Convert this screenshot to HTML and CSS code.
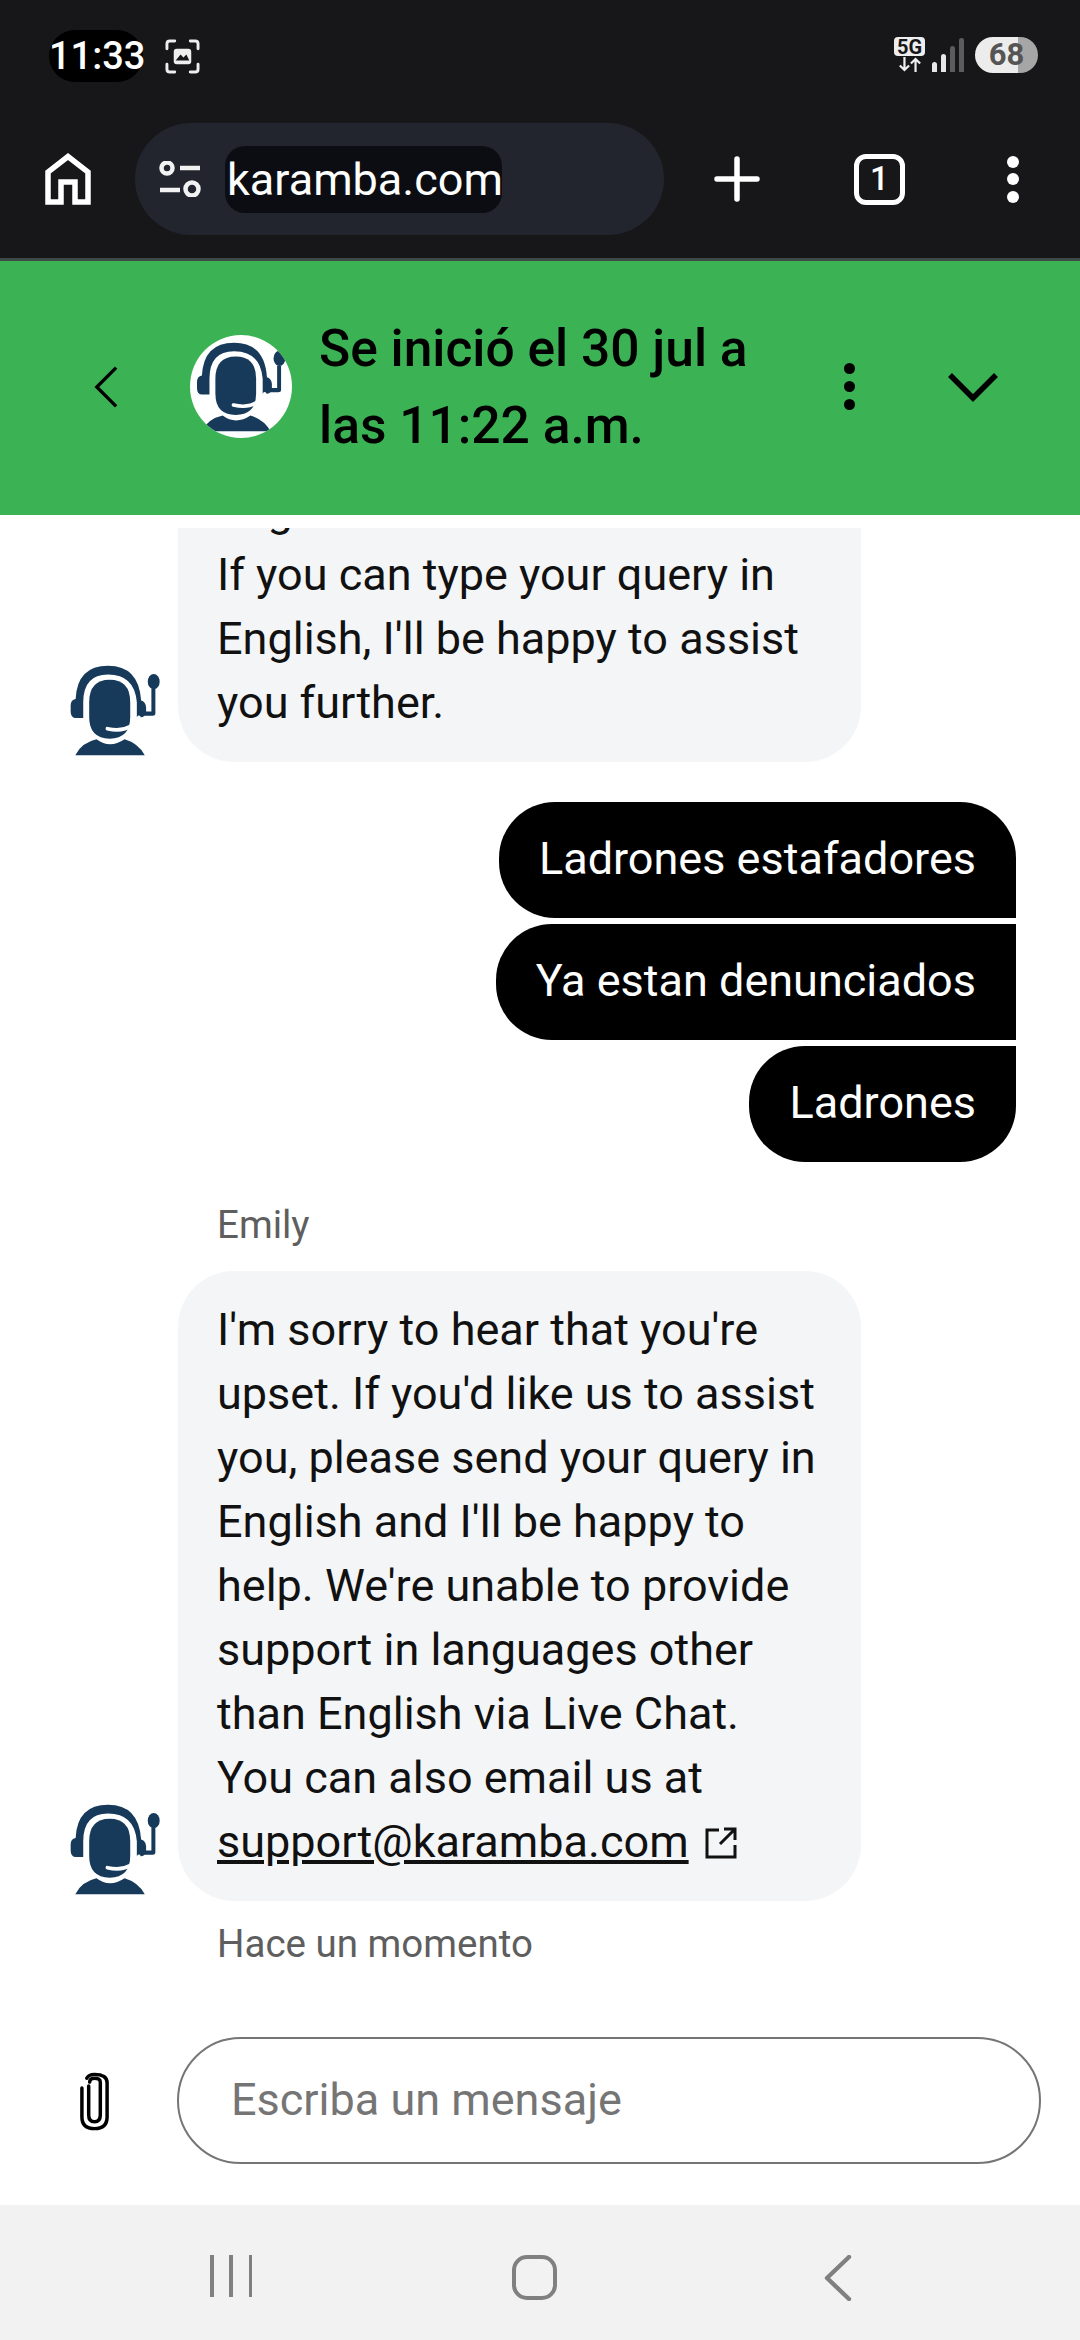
FILE: index.html
```html
<!DOCTYPE html>
<html lang="es">
<head>
    <meta charset="UTF-8">
    <meta name="viewport" content="width=device-width, initial-scale=1.0">
    <title>Karamba chat</title>
    <link rel="stylesheet" href="styles.css">
</head>
<body>
    <svg class="defs" width="0" height="0">
        <symbol id="agent" viewBox="210 78 272 274">
            <path fill="#17395a" d="M212 200 Q212 182 227 180 Q232 80 325 80 Q418 80 425 185 Q438 188 440 205 V218 H456 V150 H468 V225 Q468 231 460 231 H436 Q430 238 412 236 V190 Q405 106 325 106 Q250 106 250 190 V238 H228 Q212 238 212 218 Z"/>
            <ellipse fill="#17395a" cx="463" cy="128" rx="18" ry="23"/>
            <path fill="#17395a" d="M268 190 Q268 122 330 122 Q392 122 392 190 V235 Q392 300 330 300 Q268 300 268 235 Z"/>
            <path fill="none" stroke="#fff" stroke-width="11" stroke-linecap="round" d="M323 270 Q390 285 418 236"/>
            <path fill="#17395a" d="M226 350 Q245 312 290 302 Q330 332 375 302 Q416 314 436 350 Z"/>
        </symbol>
    </svg>

    <div class="status-bar">
        <span class="clock">11:33</span>
        <svg class="shot-icon" viewBox="0 0 36 36" fill="none" stroke="#eee" stroke-width="3" stroke-linecap="round">
            <path d="M2 10 V5 Q2 2 5 2 H10 M26 2 H31 Q34 2 34 5 V10 M34 26 V31 Q34 34 31 34 H26 M10 34 H5 Q2 34 2 31 V26"/>
            <rect x="9" y="10" width="18" height="16" rx="3" fill="#eee" stroke="none"/>
            <path d="M11 22 L16 16 L19 19 L22 16 L25 22 Z" fill="#17171a" stroke="none"/>
        </svg>
        <div class="status-right">
            <div class="net">
                <span class="net-5g">5G</span>
                <svg class="net-arrows" viewBox="0 0 26 16" fill="none" stroke="#eee" stroke-width="2.4">
                    <path d="M7 0 V14 M2 9 L7 14 L12 9 M19 16 V2 M14 7 L19 2 L24 7"/>
                </svg>
            </div>
            <div class="signal">
                <span class="bar bar-1"></span>
                <span class="bar bar-2"></span>
                <span class="bar bar-3"></span>
                <span class="bar bar-4"></span>
            </div>
            <div class="battery"><span>68</span></div>
        </div>
    </div>

    <div class="toolbar">
        <svg class="home-icon" viewBox="0 0 46 52" fill="none" stroke="#fff" stroke-width="5.5">
            <path d="M3 49 V19 L23 3.5 L43 19 V49 H30 V29 H16 V49 Z"/>
        </svg>
        <div class="url-pill">
            <svg class="tune-icon" viewBox="0 0 42 36" fill="none" stroke="#f2f2f2" stroke-width="4.5">
                <circle cx="8" cy="7" r="5.5"/>
                <path d="M21 7 H41 M1 29 H21"/>
                <circle cx="33" cy="28" r="6.5"/>
            </svg>
            <span class="url">karamba.com</span>
        </div>
        <svg class="plus-icon" viewBox="0 0 46 46" fill="none" stroke="#fff" stroke-width="5.5" stroke-linecap="round">
            <path d="M23 3 V43 M3 23 H43"/>
        </svg>
        <div class="tab-count">1</div>
        <div class="dots dots-light"><i></i><i></i><i></i></div>
    </div>

    <div class="chat-header">
        <svg class="back-icon" viewBox="0 0 26 46" fill="none" stroke="#000" stroke-width="3.6">
            <path d="M24 2 L3 23 L24 44"/>
        </svg>
        <div class="header-avatar"><svg class="header-agent"><use href="#agent"/></svg></div>
        <h1 class="chat-title">Se inició el 30 jul a las 11:22 a.m.</h1>
        <div class="dots dots-dark"><i></i><i></i><i></i></div>
        <svg class="down-icon" viewBox="0 0 50 30" fill="none" stroke="#000" stroke-width="5.5">
            <path d="M2 3 L25 26 L48 3"/>
        </svg>
    </div>

    <div class="log">
        <div class="agent-row">
            <svg class="agent-pic"><use href="#agent"/></svg>
            <div class="bubble agent-bubble">English.<br>If you can type your query in English, I'll be happy to assist you further.</div>
        </div>

        <div class="user-group">
            <div class="user-bubble first">Ladrones estafadores</div>
            <div class="user-bubble middle">Ya estan denunciados</div>
            <div class="user-bubble last">Ladrones</div>
        </div>

        <div class="sender">Emily</div>
        <div class="agent-row">
            <svg class="agent-pic"><use href="#agent"/></svg>
            <div class="bubble agent-bubble">I'm sorry to hear that you're upset. If you'd like us to assist you, please send your query in English and I'll be happy to help. We're unable to provide support in languages other than English via Live Chat.<br>You can also email us at <a class="mail" href="#">support@karamba.com</a><svg class="ext-icon" viewBox="0 0 32 32" fill="none" stroke="#111" stroke-width="3"><path d="M14 3 H2 V30 H30 V18 M19 2 H30 V13 M30 2 L15 17"/></svg></div>
        </div>
        <div class="timestamp">Hace un momento</div>
    </div>

    <div class="composer">
        <svg class="clip-icon" viewBox="0 0 32 60" fill="none" stroke="#000" stroke-width="3.6" stroke-linecap="round">
            <path d="M10 14 V44 Q10 51 16 51 Q22 51 22 44 V10 Q22 6 16 6 Q11 6 11 10 M3 16 V46 Q3 58 16 58 Q29 58 29 46 V11 Q29 2 16 2 Q10 2 8 6"/>
        </svg>
        <div class="msg-input">Escriba un mensaje</div>
    </div>

    <div class="nav-bar">
        <div class="nav-lines"><i></i><i></i><i></i></div>
        <div class="nav-home"></div>
        <svg class="nav-back" viewBox="0 0 28 46" fill="none" stroke="#808080" stroke-width="4.4" stroke-linecap="round" stroke-linejoin="round">
            <path d="M25 2 L3 23 L25 44"/>
        </svg>
    </div>
</body>
</html>
```

FILE: styles.css
```css
* {
    box-sizing: border-box;
}
html, body {
    margin: 0;
    padding: 0;
}
body {
    width: 1080px;
    height: 2340px;
    display: flex;
    flex-direction: column;
    overflow: hidden;
    background-color: #fff;
    font-family: Roboto, "Noto Sans", sans-serif;
    color: #111;
}
.defs {
    position: absolute;
}

/* phone status bar */
.status-bar {
    height: 112px;
    flex: none;
    display: flex;
    align-items: flex-start;
    padding: 30px 42px 0 49px;
    background-color: #17171a;
}
.clock {
    width: 94px;
    height: 52px;
    border-radius: 26px;
    background-color: #000;
    color: #fff;
    font-size: 38px;
    font-weight: 500;
    line-height: 52px;
    text-align: center;
}
.shot-icon {
    width: 35px;
    height: 35px;
    margin: 9px 0 0 22px;
}
.status-right {
    margin-left: auto;
    display: flex;
    align-items: flex-start;
    padding-top: 7px;
}
.net {
    width: 31px;
    display: flex;
    flex-direction: column;
    align-items: center;
}
.net-5g {
    width: 31px;
    height: 19px;
    border-radius: 4px;
    background-color: #eee;
    color: #17171a;
    font-size: 20px;
    font-weight: 700;
    line-height: 20px;
    text-align: center;
}
.net-arrows {
    width: 24px;
    height: 15px;
    margin-top: 1px;
}
.signal {
    width: 32px;
    height: 34px;
    margin: 1px 0 0 7px;
    display: flex;
    align-items: flex-end;
    justify-content: space-between;
}
.bar {
    width: 5px;
    border-radius: 3px 3px 0 0;
}
.bar-1 {
    height: 10px;
    background-color: #e6e6e6;
}
.bar-2 {
    height: 18px;
    background-color: #e6e6e6;
}
.bar-3 {
    height: 26px;
    background-color: #5c5c5c;
}
.bar-4 {
    height: 34px;
    background-color: #5c5c5c;
}
.battery {
    width: 63px;
    height: 36px;
    margin-left: 11px;
    border-radius: 18px;
    background: linear-gradient(to right, #ececec 0, #ececec 43px, #a6a6a6 43px);
    color: #555;
    font-size: 31px;
    font-weight: 700;
    line-height: 36px;
    text-align: center;
}

/* browser toolbar */
.toolbar {
    height: 149px;
    flex: none;
    display: flex;
    align-items: center;
    padding-bottom: 12px;
    padding-left: 45px;
    background-color: #17171a;
    border-bottom: 3px solid #3f4a48;
}
.home-icon {
    width: 46px;
    height: 52px;
}
.url-pill {
    width: 529px;
    height: 112px;
    margin-left: 44px;
    padding-left: 24px;
    display: flex;
    align-items: center;
    border-radius: 56px;
    background-color: #22252e;
}
.tune-icon {
    width: 42px;
    height: 36px;
    flex: none;
}
.url {
    width: 277px;
    height: 67px;
    margin-left: 24px;
    padding-left: 2px;
    border-radius: 20px;
    background-color: #0c0d12;
    color: #fff;
    font-size: 45px;
    line-height: 67px;
}
.plus-icon {
    width: 46px;
    height: 46px;
    margin-left: 50px;
}
.tab-count {
    width: 51px;
    height: 51px;
    margin-left: 94px;
    border: 5.5px solid #fff;
    border-radius: 12px;
    color: #fff;
    font-size: 33px;
    font-weight: 500;
    line-height: 40px;
    text-align: center;
}
.dots {
    display: flex;
    flex-direction: column;
}
.dots i {
    display: block;
    border-radius: 50%;
}
.dots-light {
    margin-left: 102px;
    gap: 5.5px;
}
.dots-light i {
    width: 12px;
    height: 12px;
    background-color: #fff;
}

/* green chat header */
.chat-header {
    height: 254px;
    flex: none;
    display: flex;
    align-items: center;
    padding-left: 94px;
    padding-bottom: 3px;
    background-color: #3bb354;
}
.back-icon {
    width: 24px;
    height: 44px;
    flex: none;
}
.header-avatar {
    width: 102px;
    height: 103px;
    flex: none;
    margin-left: 72px;
    padding: 7px 6px 6px;
    overflow: hidden;
    border-radius: 50%;
    background-color: #fff;
}
.header-agent {
    width: 90px;
    height: 90px;
    display: block;
}
.chat-title {
    width: 450px;
    flex: none;
    margin: 0 0 0 27px;
    color: #000;
    font-size: 51.5px;
    font-weight: 500;
    line-height: 77px;
}
.dots-dark {
    margin-left: 75px;
    gap: 7px;
}
.dots-dark i {
    width: 11px;
    height: 11px;
    background-color: #000;
}
.down-icon {
    width: 50px;
    height: 30px;
    margin-left: 93px;
}

/* messages */
.log {
    flex: 1;
    min-height: 0;
    margin-top: 13px;
    display: flex;
    flex-direction: column;
    justify-content: flex-end;
    overflow: hidden;
    font-size: 45px;
    line-height: 64px;
}
.agent-row {
    flex: none;
    display: flex;
    align-items: flex-end;
    padding-left: 70px;
}
.agent-pic {
    width: 90px;
    height: 91px;
    flex: none;
    margin-bottom: 6px;
}
.bubble {
    flex: none;
    width: 683px;
    margin-left: 18px;
    padding: 27px 40px 27px 39px;
    border-radius: 56px;
}
.agent-bubble {
    background-color: #f4f5f7;
    color: #111;
}
.mail {
    color: #111;
    text-decoration: underline;
}
.ext-icon {
    width: 32px;
    height: 32px;
    margin-left: 16px;
    vertical-align: -2px;
}
.user-group {
    flex: none;
    margin-top: 40px;
    padding-right: 64px;
    display: flex;
    flex-direction: column;
    align-items: flex-end;
    gap: 6px;
}
.user-bubble {
    height: 116px;
    padding: 0 40px;
    background-color: #000;
    color: #fff;
    line-height: 113px;
}
.first {
    border-radius: 56px 56px 0 56px;
}
.middle {
    border-radius: 56px 0 0 56px;
}
.last {
    border-radius: 56px 0 56px 56px;
}
.sender {
    flex: none;
    margin-top: 35px;
    margin-bottom: 18px;
    padding-left: 217px;
    color: #5e5e5e;
    font-size: 38.5px;
    line-height: 56px;
}
.timestamp {
    flex: none;
    margin-top: 15px;
    margin-bottom: 65px;
    padding-left: 217px;
    color: #5e5e5e;
    font-size: 38.5px;
    line-height: 56px;
}

/* input row */
.composer {
    height: 168px;
    flex: none;
    display: flex;
    padding-left: 79px;
}
.clip-icon {
    width: 31px;
    height: 59px;
    flex: none;
    margin-top: 35px;
}
.msg-input {
    width: 864px;
    height: 127px;
    margin-left: 67px;
    padding-left: 52px;
    border: 2px solid #757575;
    border-radius: 64px;
    color: #757575;
    font-size: 45px;
    line-height: 121px;
}

/* android nav */
.nav-bar {
    height: 135px;
    flex: none;
    display: flex;
    align-items: flex-start;
    padding: 50px 0 0 210px;
    background-color: #f2f2f2;
}
.nav-lines {
    width: 42px;
    height: 42px;
    display: flex;
    justify-content: space-between;
}
.nav-lines i {
    width: 3.5px;
    background-color: #808080;
}
.nav-home {
    width: 45px;
    height: 45px;
    margin-left: 260px;
    border: 4.5px solid #808080;
    border-radius: 15px;
}
.nav-back {
    width: 28px;
    height: 46px;
    margin-left: 267px;
}
```
